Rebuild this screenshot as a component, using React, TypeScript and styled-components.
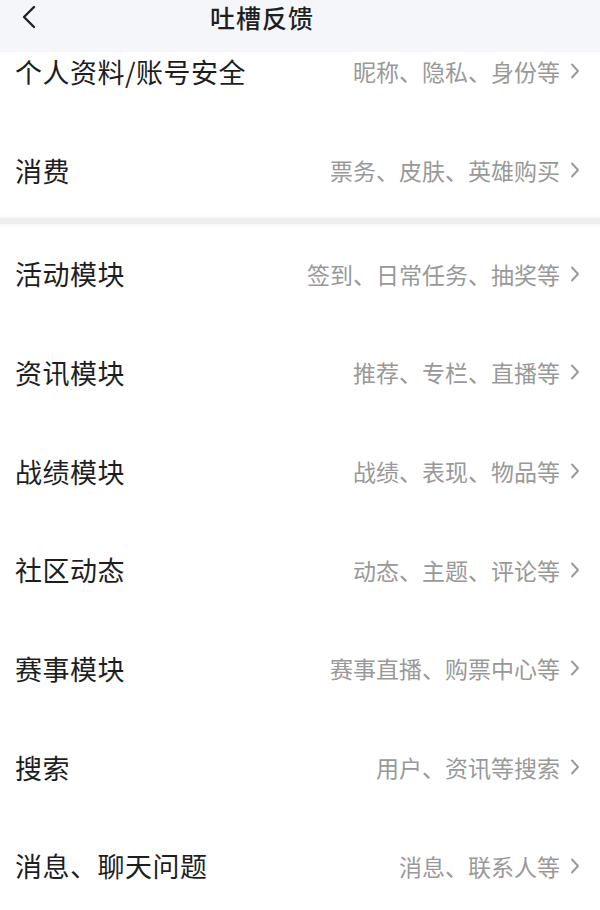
import React from "react";
import styled, { createGlobalStyle } from "styled-components";

const Global = createGlobalStyle`
  html, body { margin: 0; padding: 0; background: #ffffff; }
  body { font-family: "Noto Sans CJK SC", "Noto Sans", sans-serif; }
  * { box-sizing: border-box; }
`;

const Page = styled.div`
  width: 600px;
  min-height: 910px;
  background: #ffffff;
  overflow: hidden;
`;

const Header = styled.header`
  position: sticky;
  top: 0;
  z-index: 2;
  height: 52px;
  display: flex;
  align-items: center;
  background: rgba(244, 246, 249, 0.96);
  padding: 0 0 18px 21px;
`;

const Back = styled.button`
  width: 16px;
  height: 24px;
  padding: 0;
  border: none;
  background: transparent;
  display: flex;
  align-items: center;
  justify-content: center;
  color: #222;
`;

const Title = styled.h1`
  margin: 0 0 0 173px;
  font-size: 25px;
  font-weight: 500;
  color: #1f1f1f;
  letter-spacing: 1px;
`;

const List = styled.div`
  margin-top: -34px;
  display: flex;
  flex-direction: column;
`;

const Group = styled.section<{ $tail?: number }>`
  display: flex;
  flex-direction: column;
  padding-bottom: ${(p) => p.$tail ?? 0}px;
`;

const Divider = styled.div`
  height: 6px;
  background: #eeeeee;
  box-shadow: 0 0 4px 1px #f3f3f3;
`;

const Row = styled.div<{ $shift?: number }>`
  height: 98.7px;
  display: flex;
  align-items: center;
  justify-content: space-between;
  padding: ${(p) => (p.$shift ?? 0)}px 20px 0 15px;
`;

const Label = styled.span`
  font-size: 27px;
  font-weight: 400;
  color: #1e1e1e;
  letter-spacing: 0.5px;
`;

const Hint = styled.span`
  display: flex;
  align-items: center;
  gap: 10px;
  font-size: 23px;
  color: #999999;
`;

const Chevron = () => (
  <svg width="10" height="18" viewBox="0 0 10 18" fill="none">
    <path d="M2 2.5l6 6.5-6 6.5" stroke="#999999" strokeWidth="1.9" strokeLinecap="round" strokeLinejoin="round" />
  </svg>
);

const groupA = [
  ["个人资料/账号安全", "昵称、隐私、身份等"],
  ["消费", "票务、皮肤、英雄购买"],
];

const groupB = [
  ["活动模块", "签到、日常任务、抽奖等"],
  ["资讯模块", "推荐、专栏、直播等"],
  ["战绩模块", "战绩、表现、物品等"],
  ["社区动态", "动态、主题、评论等"],
  ["赛事模块", "赛事直播、购票中心等"],
  ["搜索", "用户、资讯等搜索"],
  ["消息、聊天问题", "消息、联系人等"],
];

export default function App() {
  return (
    <Page>
      <Global />
      <Header>
        <Back aria-label="返回">
          <svg width="14" height="24" viewBox="0 0 14 24" fill="none">
            <path d="M12 2L2 12l10 10" stroke="#222" strokeWidth="2.4" strokeLinecap="round" strokeLinejoin="round" />
          </svg>
        </Back>
        <Title>吐槽反馈</Title>
      </Header>
      <List>
        <Group $tail={3}>
          {groupA.map(([l, h]) => (
            <Row key={l} $shift={8}>
              <Label>{l}</Label>
              <Hint>
                {h}
                <Chevron />
              </Hint>
            </Row>
          ))}
        </Group>
        <Divider />
        <Group>
          {groupB.map(([l, h]) => (
            <Row key={l}>
              <Label>{l}</Label>
              <Hint>
                {h}
                <Chevron />
              </Hint>
            </Row>
          ))}
        </Group>
      </List>
    </Page>
  );
}
